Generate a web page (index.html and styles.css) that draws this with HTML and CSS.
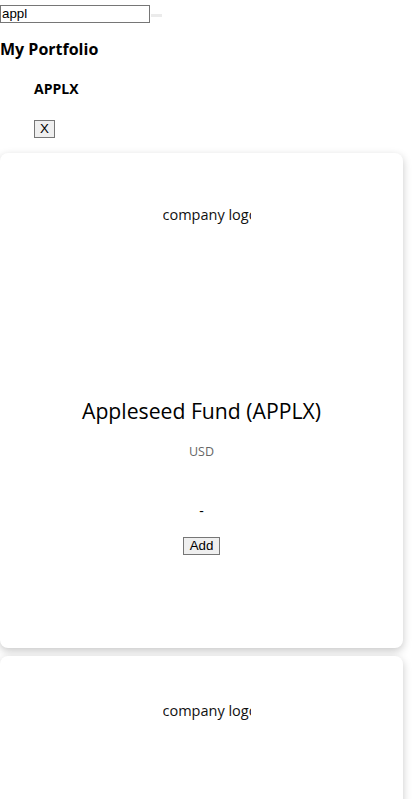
FILE: index.html
```html
<!DOCTYPE html>
<html>
<head>
<meta charset="utf-8">
<link rel="stylesheet" href="styles.css">
</head>
<body>
<div class="search">
  <input class="search-input" type="text" value="appl">
  <button class="search-btn" type="button"></button>
</div>
<h3 class="title">My Portfolio</h3>
<ul class="portfolio">
  <li class="portfolio-item">
    <h4 class="ticker">APPLX</h4>
    <button class="btn" type="button">X</button>
  </li>
</ul>
<div class="results">
  <div class="card">
    <div class="logo"><span class="logo-text">company logo</span></div>
    <div class="fund-name">Appleseed Fund (APPLX)</div>
    <div class="currency">USD</div>
    <div class="price">-</div>
    <button class="btn btn-add" type="button">Add</button>
  </div>
  <div class="card card-next">
    <div class="logo"><span class="logo-text">company logo</span></div>
  </div>
</div>
</body>
</html>
```
FILE: styles.css
```css
html, body {
  margin: 0;
  padding: 0;
  background: #fff;
}
body {
  font-family: "Open Sans", "Noto Sans", sans-serif;
  color: #000;
}
.search {
  display: flex;
  align-items: center;
  height: 24px;
}
.search-input {
  box-sizing: border-box;
  width: 150px;
  height: 18px;
  margin: 3px 0 0 0;
  padding: 0 1px;
  border: 1px solid #767676;
  font-family: "Liberation Sans", Arial, sans-serif;
  font-size: 13.33px;
  color: #000;
}
.search-btn {
  width: 11px;
  height: 3px;
  margin: 6px 0 0 1px;
  padding: 0;
  border: none;
  background: #ebebeb;
}
.title {
  margin: 13px 0 0 0;
  font-size: 16px;
  line-height: 25px;
  font-weight: 700;
}
.portfolio {
  list-style: none;
  margin: 0;
  padding: 0 0 0 34px;
}
.ticker {
  margin: 16px 0 0 0;
  font-size: 14px;
  line-height: 22px;
  font-weight: 700;
}
.btn {
  box-sizing: border-box;
  height: 18px;
  padding: 0 6px;
  border: 1px solid #767676;
  border-radius: 0;
  background: #efefef;
  font-family: "Liberation Sans", Arial, sans-serif;
  font-size: 13.33px;
  line-height: 16px;
  color: #000;
}
.portfolio-item .btn {
  margin-top: 20px;
  padding: 0 5px;
}
.results {
  margin-top: 15px;
}
.card {
  display: flex;
  flex-direction: column;
  align-items: center;
  margin: 0 11px 8px 0;
  padding-bottom: 93px;
  border-radius: 8px;
  background: #fff;
  box-shadow: 0 3px 8px rgba(0, 0, 0, 0.22);
}
.logo {
  width: 100px;
  margin-top: 51px;
  height: 22px;
}
.logo-text {
  display: block;
  width: 88px;
  margin-left: 11px;
  overflow: hidden;
  white-space: nowrap;
  font-size: 14.5px;
  line-height: 22px;
  color: #111;
}
.card-next .logo {
  margin-top: 44px;
}
.card-next {
  height: 300px;
}
.fund-name {
  margin-top: 169px;
  font-size: 21.2px;
  line-height: 32px;
}
.currency {
  margin-top: 15px;
  font-size: 12.5px;
  line-height: 20px;
  color: #666;
}
.price {
  margin-top: 38px;
  font-size: 14px;
  line-height: 22px;
}
.btn-add {
  margin-top: 15px;
}
```
